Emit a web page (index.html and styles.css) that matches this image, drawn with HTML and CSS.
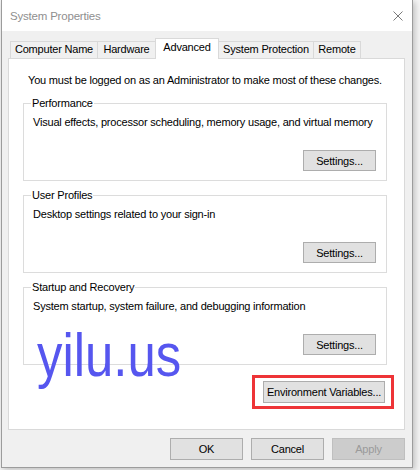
FILE: index.html
```html
<!DOCTYPE html>
<html>
<head>
<meta charset="utf-8">
<link rel="stylesheet" href="styles.css">
</head>
<body>
<div class="window">
  <div class="titlebar">
    <span class="title">System Properties</span>
    <svg class="close" width="10" height="10" viewBox="0 0 10 10"><path d="M0.5 0.5 L9.5 9.5 M9.5 0.5 L0.5 9.5" stroke="#7a7a7a" stroke-width="1" fill="none"/></svg>
  </div>
  <div class="body">
    <div class="tabs">
      <div class="tab tab-cn">Computer Name</div>
      <div class="tab tab-hw">Hardware</div>
      <div class="tab tab-adv active">Advanced</div>
      <div class="tab tab-sp">System Protection</div>
      <div class="tab tab-rm">Remote</div>
    </div>
    <div class="panel">
      <p class="intro">You must be logged on as an Administrator to make most of these changes.</p>
      <div class="group">
        <span class="group-label">Performance</span>
        <p class="desc">Visual effects, processor scheduling, memory usage, and virtual memory</p>
        <button class="btn btn-settings">Settings...</button>
      </div>
      <div class="group">
        <span class="group-label">User Profiles</span>
        <p class="desc">Desktop settings related to your sign-in</p>
        <button class="btn btn-settings">Settings...</button>
      </div>
      <div class="group">
        <span class="group-label">Startup and Recovery</span>
        <p class="desc">System startup, system failure, and debugging information</p>
        <button class="btn btn-settings">Settings...</button>
      </div>
      <div class="env-row">
        <div class="env-wrap">
          <button class="btn btn-env">Environment Variables...</button>
          <span class="highlight"></span>
        </div>
      </div>
      <div class="watermark">yilu.us</div>
    </div>
    <div class="actions">
      <button class="btn btn-action">OK</button>
      <button class="btn btn-action">Cancel</button>
      <button class="btn btn-action disabled">Apply</button>
    </div>
  </div>
</div>
</body>
</html>
```
FILE: styles.css
```css
html, body {
  margin: 0;
  padding: 0;
}
body {
  background: #f4f4f4;
  width: 420px;
  height: 470px;
  overflow: hidden;
  font-family: "Liberation Sans", Arial, sans-serif;
  font-size: 11px;
  letter-spacing: -0.2px;
  color: #000;
}
.window {
  box-sizing: border-box;
  margin-left: 1px;
  width: 412px;
  height: 468px;
  border: 1px solid #9c9c9c;
  border-top: none;
  display: flex;
  flex-direction: column;
  box-shadow: 2px 2px 6px rgba(0, 0, 0, 0.22);
  background: #f0f0f0;
}
.titlebar {
  height: 31px;
  flex: none;
  background: #fff;
  display: flex;
  align-items: center;
  justify-content: space-between;
  padding: 1px 9px 0 8px;
  box-sizing: border-box;
}
.title {
  font-size: 11.5px;
  color: #8f8f8f;
}
.close {
  display: block;
}
.body {
  flex: 1;
  display: flex;
  flex-direction: column;
  padding: 7px 7px 0 6px;
  background: #f0f0f0;
}
.tabs {
  display: flex;
  align-items: flex-end;
  margin-left: 2px;
  height: 20px;
  position: relative;
  z-index: 1;
}
.tab {
  box-sizing: border-box;
  height: 17px;
  border: 1px solid #d9d9d9;
  border-bottom: none;
  background: #f0f0f0;
  text-align: center;
  line-height: 15px;
  margin-left: -1px;
}
.tab-cn { width: 88px; margin-left: 0; }
.tab-hw { width: 59px; }
.tab-adv { width: 64px; }
.tab-sp { width: 96px; }
.tab-rm { width: 48px; }
.tab.active {
  height: 21px;
  margin-bottom: -1px;
  background: #fff;
  line-height: 17px;
  position: relative;
}
.panel {
  box-sizing: border-box;
  height: 372px;
  border: 1px solid #d9d9d9;
  background: #fff;
  padding: 14px 17px 0 14px;
  position: relative;
  display: flex;
  flex-direction: column;
}
.intro {
  margin: 0 0 15px 5px;
  line-height: 15px;
}
.group {
  box-sizing: border-box;
  height: 78px;
  border: 1px solid #dcdcdc;
  position: relative;
  padding: 11px 10px 9px 9px;
  display: flex;
  flex-direction: column;
  align-items: flex-end;
  margin-bottom: 14px;
}
.group-label {
  position: absolute;
  top: -8px;
  left: 7px;
  padding: 0 1px;
  background: #fff;
  line-height: 15px;
}
.desc {
  margin: 0;
  line-height: 15px;
  align-self: stretch;
}
.btn {
  box-sizing: border-box;
  height: 21px;
  border: 1px solid #adadad;
  background: #e1e1e1;
  font-family: "Liberation Sans", Arial, sans-serif;
  font-size: 11px;
  letter-spacing: -0.2px;
  color: #000;
  padding: 0;
  margin: 0;
}
.btn-settings {
  width: 73px;
  margin-top: auto;
}
.env-row {
  display: flex;
  justify-content: flex-end;
  margin-top: 2px;
  padding-right: 2px;
}
.env-wrap {
  position: relative;
}
.btn-env {
  width: 122px;
  height: 22px;
  display: block;
}
.highlight {
  position: absolute;
  left: -11px;
  right: -9px;
  top: -6px;
  bottom: -6px;
  border: 3px solid #ee3437;
}
.watermark {
  position: absolute;
  left: 28px;
  top: 265px;
  font-family: "Liberation Sans", sans-serif;
  font-size: 62px;
  line-height: 62px;
  letter-spacing: 0;
  color: #5656ef;
  transform: scaleX(0.82);
  transform-origin: 0 0;
}
.actions {
  display: flex;
  justify-content: flex-end;
  gap: 8px;
  margin-top: 8px;
}
.btn-action {
  width: 73px;
  height: 22px;
}
.btn.disabled {
  background: #cccccc;
  border-color: #bfbfbf;
  color: #9a9a9a;
}
```
